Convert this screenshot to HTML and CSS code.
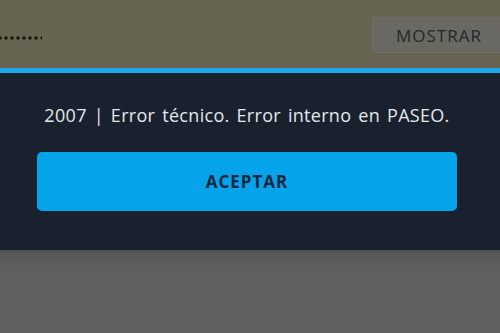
FILE: index.html
```html
<!DOCTYPE html>
<html lang="es">
<head>
<meta charset="utf-8">
<link rel="stylesheet" href="styles.css">
</head>
<body>
<div class="page">
  <header class="topbar">
    <div class="dots" aria-label="contraseña oculta"></div>
    <button class="show">MOSTRAR</button>
  </header>
  <section class="dialog">
    <p class="msg">2007 | Error técnico. Error interno en PASEO.</p>
    <button class="accept">ACEPTAR</button>
  </section>
  <div class="below"></div>
</div>
</body>
</html>
```

FILE: styles.css
```css
html, body {
  margin: 0;
  padding: 0;
  background: #606060;
}
.page {
  width: 500px;
  height: 333px;
  display: flex;
  flex-direction: column;
  overflow: hidden;
  font-family: "Open Sans", "DejaVu Sans", sans-serif;
}
.topbar {
  height: 68px;
  flex: none;
  background: #676551;
  display: flex;
  align-items: center;
  justify-content: space-between;
}
.dots {
  width: 45px;
  height: 4px;
  margin-top: 8px;
  margin-left: -3px;
  background: radial-gradient(circle, #1a1a12 1.4px, transparent 2px) 0 0 / 6px 4px repeat-x;
}
.show {
  height: 36px;
  width: 140px;
  margin-right: -12px;
  margin-top: 2px;
  background: #696863;
  border: 1px solid #706e66;
  color: #272727;
  font-family: "Open Sans", sans-serif;
  font-size: 17px;
  letter-spacing: 1px;
  text-align: left;
  padding: 0 0 0 23px;
}
.dialog {
  flex: none;
  height: 182px;
  box-sizing: border-box;
  border-top: 5px solid #1aa9ec;
  background: #19212e;
  padding: 32px 43px 0 37px;
  display: flex;
  flex-direction: column;
}
.msg {
  margin: 0;
  color: #e3e7ec;
  font-size: 18px;
  line-height: 20px;
  text-align: center;
  letter-spacing: 0.3px;
  word-spacing: 2px;
  white-space: nowrap;
}
.accept {
  margin-top: 27px;
  height: 59px;
  width: 420px;
  border: none;
  border-radius: 5px;
  background: #05a3e9;
  color: #112640;
  font-family: "Open Sans", sans-serif;
  font-weight: 700;
  font-size: 17px;
  letter-spacing: 1px;
}
.below {
  flex: 1;
  border-top: 1px solid #4a4f58;
  background: linear-gradient(#555555, #616161 20px);
}
```
